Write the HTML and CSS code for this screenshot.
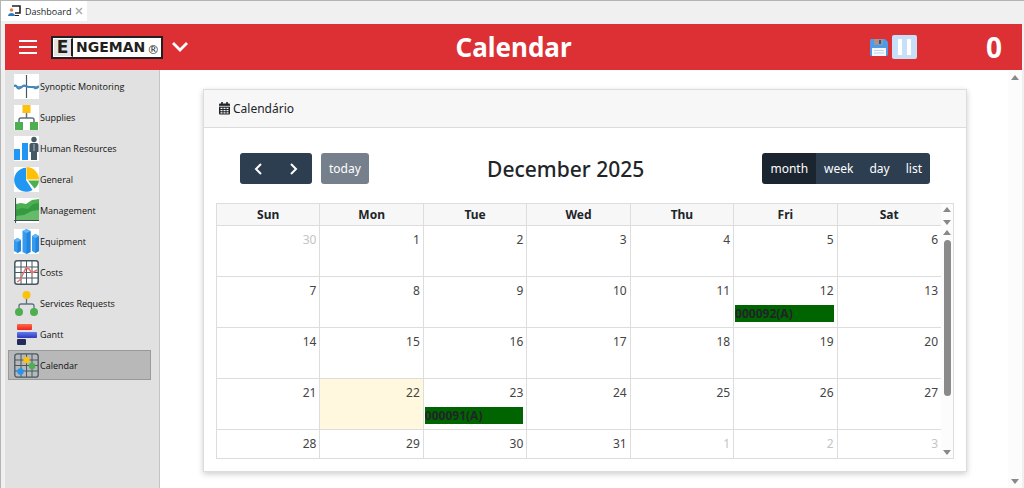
FILE: index.html
```html
<!DOCTYPE html>
<html lang="en">
<head>
  <meta charset="UTF-8" />
  <meta name="viewport" content="width=device-width, initial-scale=1.0"/>
  <title>Dashboard</title>
  <link rel="stylesheet" href="styles.css">
</head>
<body>
  <div class="tabs">
    <div class="tab">
      <svg class="tab-icon" viewBox="0 0 13 12">
        <path d="M4 1h8v7H7" fill="none" stroke="#222" stroke-width="1.6"/>
        <circle cx="3.5" cy="5" r="1.8" fill="#e8794a"/>
        <path d="M0 11c0-4 7-4 7 0z" fill="#2f78b8"/>
        <path d="M7 10.500h4" stroke="#222"/>
      </svg>
      <span>Dashboard</span>
      <button class="tab-close" aria-label="Close tab">
        <svg viewBox="0 0 8 8"><path d="M1 1l6 6M7 1L1 7" stroke="#aaa" stroke-width="1.500"/></svg>
      </button>
    </div>
  </div>

  <header class="topbar">
    <div class="brand">
      <button class="icon-btn" aria-label="Menu">
        <svg class="burger" viewBox="0 0 18 16"><path d="M0 2h18M0 8h18M0 14h18" stroke="#fff" stroke-width="2"/></svg>
      </button>
      <div class="logo"><span class="logo-e">E</span><span class="logo-rest">NGEMAN</span><span class="logo-reg">®</span></div>
      <button class="icon-btn" aria-label="Expand">
        <svg class="chevron" viewBox="0 0 18 12"><path d="M2 2l7 7 7-7" fill="none" stroke="#fff" stroke-width="2.800"/></svg>
      </button>
    </div>
    <h1>Calendar</h1>
    <div class="status">
      <button class="icon-btn" aria-label="Save">
        <svg class="floppy" viewBox="0 0 18 17">
          <path d="M1 0h14l3 3v13l-1 1H1l-1-1V1z" fill="#4f9be6"/>
          <path d="M4 0h9v6H4z" fill="#8d99aa"/>
          <path d="M5 0h3v5H5z" fill="#b8907c"/>
          <path d="M9 1h2v4H9z" fill="#44546c"/>
          <path d="M2 9h14v8H2z" fill="#f5f8fc"/>
          <path d="M4 11.500h10M4 14h10" stroke="#bdd5ee"/>
        </svg>
      </button>
      <button class="pause" aria-label="Pause"><i></i><i></i></button>
      <span class="count">0</span>
    </div>
  </header>

  <div class="content">
    <nav class="sidebar">
      <a href="#" class="item">
        <svg viewBox="0 0 25 25"><rect width="25" height="25" fill="#fff"/><path d="M12.500 1v23" stroke="#44566a" stroke-width="1.200"/><path d="M0 12.500h25" stroke="#8799aa"/><path d="M0 12q2-1 3 1t3 1 3-2 3 0 3 1 3 0 3 1 4-2" fill="none" stroke="#3f87bd" stroke-width="2.200"/></svg>
        Synoptic Monitoring
      </a>
      <a href="#" class="item">
        <svg viewBox="0 0 25 25"><rect width="25" height="25" fill="#fff"/><path d="M12.500 8v5M5 18v-3q0-2 2-2h11q2 0 2 2v3" fill="none" stroke="#5f7180" stroke-width="1.500"/><rect x="8.500" y="0" width="8" height="8" fill="#fcc10d"/><rect x="1" y="17" width="8" height="8" fill="#4caf50"/><rect x="16" y="17" width="8" height="8" fill="#4caf50"/></svg>
        Supplies
      </a>
      <a href="#" class="item">
        <svg viewBox="0 0 25 25"><rect width="25" height="25" fill="#fff"/><path d="M0 13h6v11H0zM8 7h6v17H8z" fill="#2196f3"/><circle cx="20" cy="3.500" r="2.700" fill="#455a64"/><path d="M17.500 7h5q2 0 2 2v7h-1.500v8h-6v-8h-1.500V9q0-2 2-2z" fill="#455a64"/><path d="M20 8v7" stroke="#c9d2d7" stroke-width=".8"/></svg>
        Human Resources
      </a>
      <a href="#" class="item">
        <svg viewBox="0 0 25 25"><rect width="25" height="25" fill="#fff"/><path d="M12 13V.8A12 12 0 1 0 18.500 23z" fill="#2196f3"/><path d="M12.500 12.500V0A12.500 12.500 0 0 1 25 12.500z" fill="#ffc107"/><path d="M14 13.500h11q-.5 5-4.500 8z" fill="#4caf50"/></svg>
        General
      </a>
      <a href="#" class="item">
        <svg viewBox="0 0 25 25"><rect width="25" height="25" fill="#fff"/><path d="M2 6l5-1 5 1 6-4 7-1v21H2z" fill="#4caf50"/><path d="M2 12l6-2 6 1 5-5 6-1v12l-7 1-7 4-9 1z" fill="#349b42"/><path d="M2 18l8-1 8-4 7-1v10H2z" fill="#66bb6a"/><path d="M1.500 0v25M0 22.500h25" stroke="#3d5050" stroke-width="1.200"/></svg>
        Management
      </a>
      <a href="#" class="item">
        <svg viewBox="0 0 25 25"><rect width="25" height="25" fill="#fff"/><path d="M0 11l3.500-2L7 11v11l-3.500 2L0 22z" fill="#359ced"/><path d="M8.500 2L12.500 0l4 2v21l-4 2-4-2z" fill="#359ced"/><path d="M18 7l3.500-2L25 7v15l-3.500 2L18 22z" fill="#359ced"/><path d="M3.500 13L7 11v11l-3.500 2zM12.500 4l4-2v21l-4 2zM21.500 9L25 7v15l-3.500 2z" fill="#2386de"/><path d="M0 11l3.500-2L7 11l-3.500 2zM8.500 2l4-2 4 2-4 2zM18 7l3.500-2L25 7l-3.500 2z" fill="#64b5f6"/></svg>
        Equipment
      </a>
      <a href="#" class="item">
        <svg viewBox="0 0 25 25"><rect x=".8" y=".8" width="23.400" height="23.400" rx="2.500" fill="#fff" stroke="#455a64" stroke-width="1.500"/><path d="M7 1v23M12.500 1v23M18 1v23M1 7h23M1 12.500h23M1 18h23" stroke="#455a64"/><path d="M3 22l3-2 6-12 3 1 3 4 5-3" fill="none" stroke="#e5736a" stroke-width="1.500"/><circle cx="12" cy="8" r="1.300" fill="#e5736a"/><circle cx="18" cy="12" r="1.300" fill="#e5736a"/></svg>
        Costs
      </a>
      <a href="#" class="item">
        <svg viewBox="0 0 25 25"><path d="M12.500 7v6M5 18v-3q0-2 2-2h11q2 0 2 2v3" fill="none" stroke="#5f7180" stroke-width="1.300"/><circle cx="12.500" cy="4" r="4" fill="#fcc10d"/><circle cx="5" cy="21" r="4" fill="#4caf50"/><circle cx="20" cy="21" r="4" fill="#4caf50"/></svg>
        Services Requests
      </a>
      <a href="#" class="item">
        <svg viewBox="0 0 25 25">
          <defs>
            <linearGradient id="red" x2="0" y2="1"><stop stop-color="#ff6b45"/><stop offset="1" stop-color="#ee2222"/></linearGradient>
            <linearGradient id="blue" x2="0" y2="1"><stop stop-color="#5f7cf0"/><stop offset="1" stop-color="#3038b8"/></linearGradient>
          </defs>
          <rect x="3" y="2" width="15" height="6" rx="1" fill="url(#red)"/><rect x="3" y="10" width="20" height="6" rx="1" fill="url(#blue)"/><rect x="3" y="17" width="9" height="6" rx="1" fill="#232a5c"/>
        </svg>
        Gantt
      </a>
      <a href="#" class="item active">
        <svg viewBox="0 0 25 25"><rect x=".8" y=".8" width="23.400" height="23.400" rx="2.500" fill="none" stroke="#455a64" stroke-width="1.300"/><path d="M7 1v23M12.500 1v23M18 1v23M1 7h23M1 12.500h23M1 18h23" stroke="#455a64"/><circle cx="12.500" cy="7" r="3.200" fill="#fcc10d"/><circle cx="18" cy="13" r="3.200" fill="#4caf50"/><circle cx="6.500" cy="18.500" r="3.200" fill="#2196f3"/></svg>
        Calendar
      </a>
    </nav>

    <main class="main">
      <section class="card">
        <div class="card-header">
          <svg class="cal-icon" viewBox="0 0 11 13"><path d="M3 0v3M8 0v3" stroke="#212529" stroke-width="1.600"/><rect y="1.500" width="11" height="11" rx="1" fill="#212529"/><path d="M0 4.300h11" stroke="#f7f7f7" stroke-width=".8"/><path d="M1.500 6.300h8M1.500 8.600h8M1.500 10.900h8" stroke="#f7f7f7" stroke-width="1.300" stroke-dasharray="2 1"/></svg>
          Calendário
        </div>
        <div class="card-body">
          <div class="toolbar">
            <div class="left">
              <div class="btn-group nav-group">
                <button class="btn" aria-label="Previous month"><svg class="arrow" viewBox="0 0 8 12"><path d="M7 1L2 6l5 5" fill="none" stroke="#fff" stroke-width="2"/></svg></button>
                <button class="btn" aria-label="Next month"><svg class="arrow" viewBox="0 0 8 12"><path d="M1 1l5 5-5 5" fill="none" stroke="#fff" stroke-width="2"/></svg></button>
              </div>
              <button class="btn today-btn">today</button>
            </div>
            <h2>December 2025</h2>
            <div class="btn-group">
              <button class="btn on">month</button>
              <button class="btn">week</button>
              <button class="btn">day</button>
              <button class="btn">list</button>
            </div>
          </div>

          <div class="calendar">
            <div class="grid">
              <table>
                <thead>
                  <tr><th>Sun</th><th>Mon</th><th>Tue</th><th>Wed</th><th>Thu</th><th>Fri</th><th>Sat</th></tr>
                </thead>
                <tbody>
                  <tr><td class="other">30</td><td>1</td><td>2</td><td>3</td><td>4</td><td>5</td><td>6</td></tr>
                  <tr><td>7</td><td>8</td><td>9</td><td>10</td><td>11</td><td>12<div class="event">000092(A)</div></td><td>13</td></tr>
                  <tr><td>14</td><td>15</td><td>16</td><td>17</td><td>18</td><td>19</td><td>20</td></tr>
                  <tr><td>21</td><td class="current">22</td><td>23<div class="event">000091(A)</div></td><td>24</td><td>25</td><td>26</td><td>27</td></tr>
                  <tr><td>28</td><td>29</td><td>30</td><td>31</td><td class="other">1</td><td class="other">2</td><td class="other">3</td></tr>
                </tbody>
              </table>
            </div>
            <div class="bars">
              <div class="scrollbar head-bar"><i class="up"></i><i class="down"></i></div>
              <div class="scrollbar body-bar"><i class="up"></i><span class="thumb"></span><i class="down"></i></div>
            </div>
          </div>
        </div>
      </section>
    </main>
    <div class="scrollbar page-bar"><i class="up"></i><i class="down"></i></div>
  </div>
</body>
</html>
```
FILE: styles.css
```css
* {
  box-sizing: border-box;
}

body {
  font-family: "Noto Sans", "Open Sans", sans-serif;
  background: #f0f0f0;
  color: #212529;
  display: flex;
  flex-direction: column;
  height: 100vh;
  margin: 0;
  border-top: 1px solid #b4b4b4;
  border-left: 1px solid #b4b4b4;
  overflow: hidden;
}

button {
  font-family: inherit;
  border: none;
  cursor: pointer;
}

svg {
  display: block;
  flex: none;
}

/* window tabs */
.tabs {
  display: flex;
  height: 23px;
  flex: none;
}

.tab {
  display: flex;
  align-items: center;
  gap: 4px;
  height: 20px;
  padding: 0 4px 0 7px;
  background: #fff;
  font-family: "Open Sans", sans-serif;
  font-size: 9px;
}

.tab-icon {
  width: 13px;
  height: 12px;
}

.tab-close {
  background: none;
  padding: 0;
}

.tab-close svg {
  width: 8px;
  height: 8px;
}

/* red bar */
.topbar {
  display: flex;
  align-items: center;
  height: 46px;
  flex: none;
  margin: 0 2px 0 4px;
  padding: 0 14px;
  background: #dc3035;
  color: #fff;
}

.brand,
.status {
  flex: 1;
  display: flex;
  align-items: center;
}

.brand {
  gap: 8px;
}

.status {
  justify-content: flex-end;
  gap: 4px;
}

.topbar h1 {
  margin: 0;
  font-size: 26px;
  line-height: 46px;
}

.icon-btn {
  background: none;
  padding: 0;
}

.burger {
  width: 18px;
  height: 16px;
}

.brand .icon-btn {
  margin-right: 6px;
}

.logo {
  display: flex;
  height: 23px;
  border: 2px solid #231f20;
  background: #fff;
  color: #231f20;
  font-family: "DejaVu Sans", sans-serif;
  font-weight: bold;
  line-height: 19px;
}

.logo-e {
  width: 20px;
  border: 1px solid #fff;
  border-right: 2px solid #231f20;
  background: #e4e4e4;
  font-size: 17px;
  line-height: 17px;
  text-align: center;
}

.logo-rest {
  padding-left: 3px;
  font-size: 14px;
}

.logo-reg {
  align-self: flex-end;
  padding: 0 2px;
  font-size: 12px;
  font-weight: normal;
  line-height: 13px;
}

.chevron {
  width: 18px;
  height: 12px;
}

.floppy {
  width: 18px;
  height: 17px;
}

.pause {
  display: flex;
  justify-content: center;
  gap: 5px;
  width: 25px;
  height: 24px;
  padding: 4px 0;
  border-radius: 2px;
  background: #c7e0f7;
}

.pause i {
  width: 4px;
  background: #fff;
}

.count {
  width: 87px;
  padding-right: 6px;
  text-align: right;
  font-size: 28px;
  font-weight: bold;
}

/* content */
.content {
  flex: 1;
  display: flex;
  min-height: 0;
  margin: 0 2px 0 4px;
  background: #fff;
}

.sidebar {
  flex: none;
  display: flex;
  flex-direction: column;
  gap: 1px;
  width: 155px;
  padding: 1px 8px 0 3px;
  background: #e1e1e1;
  border-right: 1px solid #c4c4c4;
  font-family: "Open Sans", sans-serif;
  font-size: 9px;
}

.item {
  display: flex;
  align-items: center;
  gap: 1px;
  height: 30px;
  padding-left: 5px;
  border: 1px solid transparent;
  color: #111;
  text-decoration: none;
}

.item svg {
  width: 25px;
  height: 25px;
}

.item.active {
  background: #b8b8b8;
  border-color: #999;
}

.main {
  flex: 1;
  min-width: 0;
  padding: 19px 41px 19px 43px;
}

.card {
  border: 1px solid #dcdcdc;
  box-shadow: 0 2px 6px rgba(0, 0, 0, 0.2);
}

.card-header {
  display: flex;
  align-items: center;
  gap: 3px;
  height: 38px;
  padding-left: 15px;
  background: #f7f7f7;
  border-bottom: 1px solid #dcdcdc;
  font-size: 12px;
}

.cal-icon {
  width: 11px;
  height: 13px;
}

.card-body {
  padding: 25px 12px 12px;
}

.toolbar {
  display: flex;
  align-items: center;
  justify-content: space-between;
  margin: 0 24px 19px;
}

.toolbar .left {
  display: flex;
  gap: 9px;
}

.toolbar h2 {
  margin: 0;
  font-size: 21px;
  font-weight: 500;
  line-height: 30px;
}

.btn-group {
  display: flex;
  border-radius: 3px;
  overflow: hidden;
}

.btn {
  height: 31px;
  padding: 0 8px;
  background: #2c3e50;
  color: #fff;
  font-size: 12px;
}

.btn.on {
  background: #1a252f;
}

.nav-group .btn {
  width: 36px;
}

.arrow {
  width: 8px;
  height: 12px;
  margin: 0 auto;
}

.today-btn {
  border-radius: 3px;
  background: #76808c;
}

.calendar {
  display: flex;
  height: 256px;
  border: 1px solid #ddd;
}

.grid {
  flex: 1;
  overflow: hidden;
}

.grid table {
  width: 100%;
  table-layout: fixed;
  border-collapse: separate;
  border-spacing: 0;
}

.grid th {
  height: 22px;
  padding: 0;
  background: #f7f7f7;
  font-size: 12px;
  line-height: 20px;
}

.grid th,
.grid td {
  border-right: 1px solid #ddd;
  border-bottom: 1px solid #ddd;
}

.grid th:last-child,
.grid td:last-child {
  border-right: none;
}

.grid td {
  height: 51px;
  padding: 4px 3px 0 1px;
  font-size: 12px;
  line-height: 20px;
  text-align: right;
  vertical-align: top;
  color: #444;
}

.grid td.other {
  color: #c4c4c4;
}

.grid td.current {
  background: #fff8df;
}

.event {
  height: 17px;
  margin-top: 4px;
  background: #006400;
  color: #212529;
  font-size: 12px;
  font-weight: bold;
  line-height: 17px;
  text-align: left;
}

/* scrollbars */
.bars {
  display: flex;
  flex-direction: column;
  width: 12px;
}

.scrollbar {
  display: flex;
  flex-direction: column;
  align-items: center;
  justify-content: space-between;
  background: #fcfcfc;
}

.scrollbar i {
  flex: none;
  border: 4px solid transparent;
}

.scrollbar .up {
  border-top: none;
  border-bottom: 5px solid #888;
}

.scrollbar .down {
  border-bottom: none;
  border-top: 5px solid #888;
}

.head-bar {
  height: 22px;
  padding: 3px 0 1px;
}

.body-bar {
  flex: 1;
  padding: 4px 0 3px;
}

.thumb {
  width: 7px;
  height: 156px;
  margin: 5px 0 auto;
  border-radius: 4px;
  background: #8a8a8a;
}

.page-bar {
  flex: none;
  width: 14px;
  padding: 5px 0 4px;
}
```
